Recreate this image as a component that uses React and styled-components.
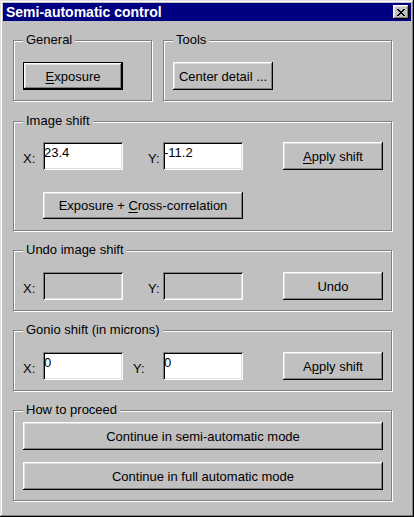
import styled, { createGlobalStyle } from "styled-components";

const GlobalStyle = createGlobalStyle`
  html, body {
    margin: 0;
    padding: 0;
    background: #c0c0c0;
  }
`;

const bevel = `
  box-shadow: inset -1px -1px #000, inset 1px 1px #fff,
    inset -2px -2px #808080, inset 2px 2px #dfdfdf;
`;

const Window = styled.div`
  box-sizing: border-box;
  width: 414px;
  height: 517px;
  padding: 3px;
  background: #c0c0c0;
  box-shadow: inset -1px -1px #000, inset 1px 1px #dfdfdf,
    inset -2px -2px #808080, inset 2px 2px #fff;
  font-family: "Liberation Sans", Arial, sans-serif;
  font-size: 13px;
  color: #000;
`;

const TitleBar = styled.div`
  height: 18px;
  background: #000080;
  display: flex;
  align-items: center;
  justify-content: space-between;
  padding: 0 2px 0 3px;
`;

const Title = styled.span`
  color: #fff;
  font-weight: bold;
  font-size: 14px;
  line-height: 18px;
  white-space: nowrap;
`;

const CloseButton = styled.button`
  box-sizing: border-box;
  width: 16px;
  height: 14px;
  padding: 0;
  border: none;
  background: #c0c0c0;
  display: flex;
  align-items: center;
  justify-content: center;
  ${bevel}
`;

const Body = styled.div`
  display: flex;
  flex-direction: column;
  gap: 19px;
  padding: 19px 19px 0 10px;
`;

const TopRow = styled.div`
  display: grid;
  grid-template-columns: 139px 229px;
  gap: 11px;
  margin-bottom: 1px;
`;

const Group = styled.div`
  position: relative;
  box-sizing: border-box;
  border: 1px solid #808080;
  box-shadow: inset 1px 1px #fff, 1px 1px #fff;
  padding: ${(p) => p.$pad || "21px 8px 10px 9px"};
`;

const Legend = styled.span`
  position: absolute;
  top: -9px;
  left: 9px;
  padding: 0 3px;
  background: #c0c0c0;
  line-height: 15px;
  white-space: nowrap;
`;

const Row = styled.div`
  display: flex;
  align-items: center;
  height: 28px;
`;

const Stack = styled.div`
  display: flex;
  flex-direction: column;
  gap: ${(p) => p.$gap || "12px"};
`;

const FieldLabel = styled.span`
  width: ${(p) => p.$w || "20px"};
  margin-left: ${(p) => p.$ml || "0"};
  padding-top: 4px;
  line-height: 15px;
`;

const Input = styled.input`
  box-sizing: border-box;
  width: 80px;
  height: 28px;
  margin: 0;
  padding: 2px 1px 10px;
  border: none;
  outline: none;
  font: inherit;
  line-height: 15px;
  color: #000;
  background: ${(p) => (p.disabled ? "#c0c0c0" : "#fff")};
  box-shadow: inset 1px 1px #808080, inset -1px -1px #fff,
    inset 2px 2px #000, inset -2px -2px #dfdfdf;
`;

const Button = styled.button`
  box-sizing: border-box;
  width: ${(p) => p.$w || "100px"};
  height: ${(p) => p.$h || "28px"};
  margin: 0;
  margin-left: ${(p) => p.$ml || "0"};
  padding: 0;
  border: ${(p) => (p.$default ? "1px solid #000" : "none")};
  font: inherit;
  color: #000;
  background: #c0c0c0;
  cursor: default;
  ${bevel}
`;

const Key = styled.u`
  text-underline-offset: 2px;
`;

const CloseGlyph = () => (
  <svg width="8" height="7" viewBox="0 0 8 7" shapeRendering="crispEdges">
    <path
      d="M0 0h2v1h-2zM6 0h2v1h-2zM1 1h2v1h-2zM5 1h2v1h-2zM2 2h4v1h-4zM3 3h2v1h-2zM2 4h4v1h-4zM1 5h2v1h-2zM5 5h2v1h-2zM0 6h2v1h-2zM6 6h2v1h-2z"
      fill="#000"
    />
  </svg>
);

export default function App() {
  return (
    <>
      <GlobalStyle />
      <Window>
        <TitleBar>
          <Title>Semi-automatic control</Title>
          <CloseButton aria-label="Close">
            <CloseGlyph />
          </CloseButton>
        </TitleBar>

        <Body>
          <TopRow>
            <Group>
              <Legend>General</Legend>
              <Button $default>
                <Key>E</Key>xposure
              </Button>
            </Group>
            <Group>
              <Legend>Tools</Legend>
              <Button>Center detail ...</Button>
            </Group>
          </TopRow>

          <Group $pad="20px 8px 11px 9px">
            <Legend>Image shift</Legend>
            <Row>
              <FieldLabel>X:</FieldLabel>
              <Input defaultValue="23.4" />
              <FieldLabel $ml="25px" $w="15px">Y:</FieldLabel>
              <Input defaultValue="-11.2" />
              <Button $ml="auto">
                <Key>A</Key>pply shift
              </Button>
            </Row>
            <Button $w="200px" $h="27px" $ml="20px" style={{ marginTop: 22 }}>
              Exposure + <Key>C</Key>ross-correlation
            </Button>
          </Group>

          <Group>
            <Legend>Undo image shift</Legend>
            <Row>
              <FieldLabel>X:</FieldLabel>
              <Input disabled />
              <FieldLabel $ml="25px" $w="15px">Y:</FieldLabel>
              <Input disabled />
              <Button $ml="auto">Undo</Button>
            </Row>
          </Group>

          <Group>
            <Legend>Gonio shift (in microns)</Legend>
            <Row>
              <FieldLabel>X:</FieldLabel>
              <Input defaultValue="0" />
              <FieldLabel $ml="10px" $w="30px">Y:</FieldLabel>
              <Input defaultValue="0" />
              <Button $ml="auto">
                A<Key>p</Key>ply shift
              </Button>
            </Row>
          </Group>

          <Group $pad="11px 8px 10px 9px">
            <Legend>How to proceed</Legend>
            <Stack>
              <Button $w="100%">Continue in semi-automatic mode</Button>
              <Button $w="100%">Continue in full automatic mode</Button>
            </Stack>
          </Group>
        </Body>
      </Window>
    </>
  );
}
